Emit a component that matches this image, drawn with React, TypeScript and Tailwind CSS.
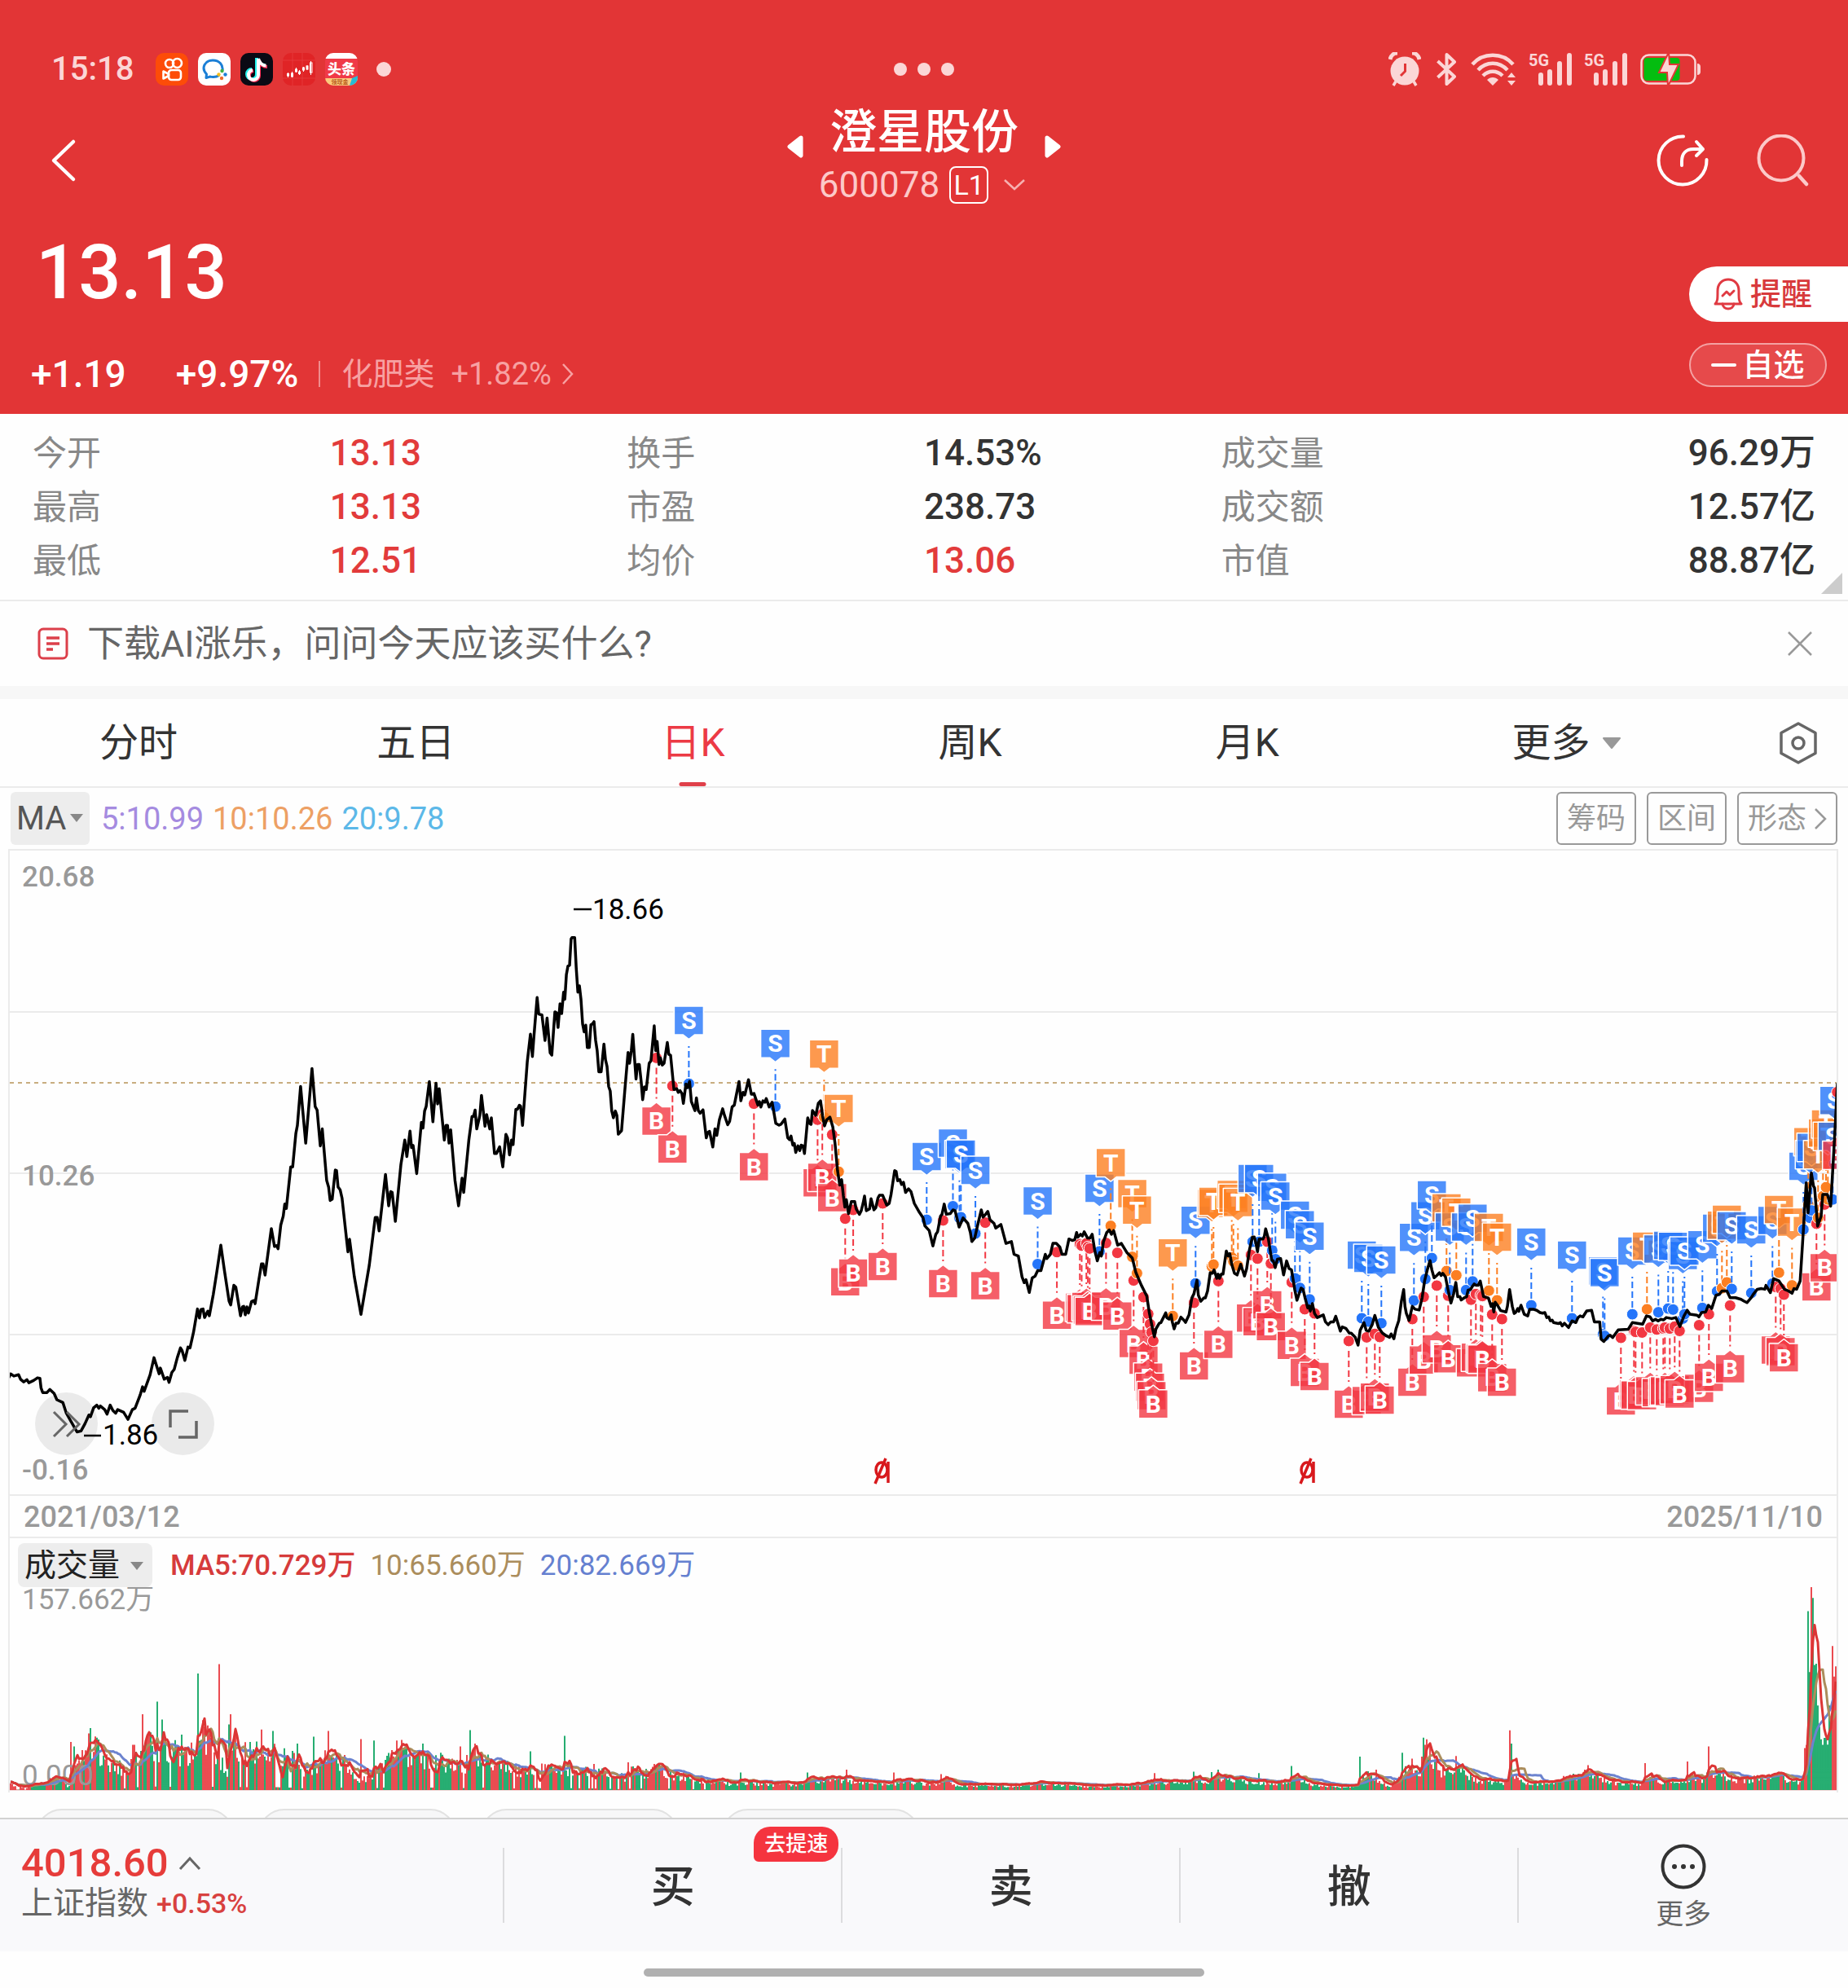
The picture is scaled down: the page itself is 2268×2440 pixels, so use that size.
import React from "react";

type Kind = "B" | "S" | "T";
type View = { x: number; y: number; sx: number; sy: number };

/* Each stretch of the chart data is stored on its own grid (origin + units per pixel). */
const V1: View = { x: 0, y: 1040, sx: 2.063, sy: 1.823 };
const V2: View = { x: 740, y: 1160, sx: 2.24, sy: 2.24 };
const V3: View = { x: 1400, y: 1300, sx: 3, sy: 2.9 };
const V4: View = { x: 1860, y: 1260, sx: 3, sy: 2.45 };

const priceParts: [View, string][] = [
  [V1, "22,1187 27,1178 35,1183 47,1180 52,1190 60,1196 68,1191 73,1198 85,1193 95,1187 101,1188 104,1210 108,1220 119,1220 126,1213 137,1222 144,1236 159,1242 168,1266 180,1285 195,1308 205,1306 215,1290 225,1270 229,1274 237,1254 245,1248 250,1255 254,1250 265,1258 271,1268 279,1248 286,1260 293,1266 298,1258 313,1264 324,1280 335,1258 342,1255 355,1225 361,1207 365,1217 380,1180 390,1142 403,1178 406,1165 416,1190 424,1186 428,1197 435,1175 441,1168 449,1142 457,1120 461,1126 468,1148 476,1118 481,1120 490,1085 500,1033 505,1053 509,1034 514,1033 518,1052 526,1038 530,1048 540,1000 549,950 559,890 568,945 580,1015 584,1024 592,980 597,984 609,1048 614,1028 617,1027 621,1046 625,1028 629,1042 637,1016 643,1014 646,1021 655,970 662,932 666,932 671,957 687,853 695,893 700,891 704,898 711,845 717,825 721,798 725,808 736,715 741,715 749,640 753,622 761,535 774,662 790,495 798,580 803,588 811,668 816,630 827,745 832,760 836,790 841,787 849,722 852,723 856,760 861,766 866,785 881,905 885,877 897,960 914,1045 935,935 950,828 955,828 960,858 976,732 984,802 989,770 993,772 1001,837 1015,710 1025,655 1030,692 1038,635 1042,672 1046,667 1055,730 1067,615 1071,628 1075,590 1079,580 1087,524 1096,614 1104,528 1108,574 1112,540 1125,655 1129,622 1133,622 1137,662 1141,632 1152,745 1161,802 1170,740 1174,772 1187,655 1195,602 1199,602 1203,588 1207,630 1215,600 1219,555 1228,624 1232,598 1240,630 1244,605 1252,685 1257,685 1265,670 1273,715 1281,642 1285,650 1290,688 1295,655 1299,665 1306,586 1310,586 1315,577 1318,579 1323,622 1335,480 1343,418 1348,468 1352,420 1360,336 1364,373 1372,375 1380,432 1385,382 1393,460 1397,465 1405,368 1409,370 1413,403 1418,350 1422,372 1427,324 1430,340 1434,285 1438,266 1442,264 1446,205 1448,202 1455,202 1459,270 1463,324 1467,310 1471,340 1475,395 1479,413 1483,398 1487,448 1492,448 1496,397 1500,395 1504,390 1508,432 1512,455 1516,502 1522,502 1529,440 1533,475 1537,490 1541,535 1545,545 1549,590 1553,605 1558,590 1562,600"],
  [V2, "42,520 51,510 60,400 69,295 73,325 78,290 82,245 91,368 95,328 100,328 105,375 109,425 114,390 119,397 127,325 132,318 141,222 145,290 149,265 154,328 158,310 163,330 168,325 177,268 181,300 186,303 195,397 203,395 207,405 212,400 217,408 221,435 228,382 232,392 238,375 243,430 253,455 257,420 262,455 267,462 275,453 284,530 288,515 293,512 302,555 308,505 313,523 320,480 329,450 334,468 343,494 348,485 355,445 361,440 374,375 379,428 385,405 390,412 400,370 408,410 415,408 426,440 430,430 434,445 440,428 445,432 449,422 457,445 465,432 475,490 484,495 490,492 500,478 508,530 513,535 517,525 522,550 526,545 530,570 536,552 541,565 545,550 550,552 554,573 563,475 568,490 572,493 576,455 585,468 592,435 598,428 604,470 609,497 615,480 624,473 632,500 638,545 645,620 651,660 656,645 661,690 665,720 669,700 675,738 683,705 692,705 696,725 705,740 710,730 715,710 719,690 724,730 733,725 737,697 745,728 750,722 756,695 760,688 769,688 774,700 780,715 787,710 792,685 802,620 806,622 810,648 816,645 821,658 826,652 832,680 840,670 847,678 856,710 870,735 880,750 885,772 897,785 907,827 915,795 920,788 928,745 932,740 938,712 944,740 955,738 962,728 968,730 979,775 985,762 990,750 1003,765 1010,790 1014,815 1022,805 1030,770 1040,728 1045,748 1052,740 1058,732 1064,755 1075,765 1080,778 1094,768 1108,820 1123,815 1130,850 1142,855 1152,912 1158,928 1163,920 1172,955 1180,915 1188,910 1195,895 1204,895 1212,865 1216,850 1220,862 1230,850 1237,820 1246,820 1256,830 1262,850 1272,850 1281,808 1290,812 1297,810 1302,790 1305,803 1313,795 1318,800 1323,788 1332,805 1339,805 1345,795 1352,840 1359,868 1366,845 1370,855 1376,815 1385,790 1392,783 1398,795 1404,785 1415,825 1425,820 1440,845 1455,860 1465,900 1480,935 1495,965 1502,1010 1510,1050"],
  [V3, "50,988 56,960 68,940 74,938 92,903 96,920 104,925 112,910 116,935 123,960 130,940 138,940 148,918 160,930 165,937 178,910 188,850 196,835 207,787 212,840 221,862 232,850 238,850 246,825 256,760 264,762 270,750 276,768 280,780 285,765 290,780 297,765 303,765 315,683 322,700 328,692 335,730 345,762 355,768 368,730 382,772 390,745 400,680 411,633 418,633 423,650 430,685 436,640 450,640 455,630 460,604 470,640 482,715 488,718 495,742 503,712 515,710 526,768 537,718 546,745 555,750 567,820 575,858 590,815 598,820 605,850 615,885 620,878 624,897 632,870 640,905 650,920 672,910 680,935 690,945 700,935 710,935 718,915 735,968 742,953 755,958 768,975 775,975 790,990 800,1018 808,965 822,938 830,965 840,968 852,945 862,912 875,955 890,975 905,985 916,990 922,978 932,995 940,960 950,930 960,860 968,820 973,880 978,905 988,930 1000,880 1010,890 1025,893 1036,850 1045,790 1055,750 1065,717 1072,750 1080,778 1090,770 1100,760 1106,770 1112,762 1122,775 1130,815 1142,868 1152,835 1160,795 1167,845 1175,845 1180,857 1190,850 1200,845 1205,822 1214,820 1220,810 1228,800 1235,805 1242,805 1250,790 1262,845 1280,850 1290,880 1295,870 1300,900 1305,865 1315,878 1325,895 1345,900 1350,880 1358,820 1368,880 1375,905"],
  [V4, "0,860 8,848 12,856 20,838 32,865 45,870 52,850 65,850 78,853 90,860 100,862 108,860 115,875 122,873 128,885 135,883 140,890 158,893 165,890 172,900 180,892 195,905 208,885 222,890 230,875 238,870 248,873 262,855 280,853 290,888 310,888 315,940 325,947 342,930 348,928 358,935 378,912 415,910 430,890 468,895 482,870 495,873 505,885 515,880 525,885 535,880 545,882 555,875 575,878 590,875 605,902 620,870 632,853 642,865 668,868 675,873 685,860 700,858 710,838 722,848 738,808 750,805 760,795 778,795 790,815 810,815 830,820 840,825 852,830 868,815 875,805 890,790 905,788 918,790 922,778 938,800 950,758 970,765 990,790 1005,795 1018,802 1025,788 1035,790 1048,765 1060,610 1070,470 1077,560 1089,440 1097,480 1101,485 1112,600 1125,570 1131,505 1148,505 1160,540 1170,400 1178,280 1185,170"],
];

const markParts: [View, string][] = [
  [V2, "B147,310 B191,387 S236,381 B415,436 S474,444 B590,480 B603,465 T608,473 B630,521 T648,623 B666,752 B688,728 B769,710 S890,755 B935,757 S962,718 S980,750 S984,748 S1024,793 B1051,763 S1195,877 B1248,844 B1311,822 B1316,826 B1329,820 B1333,830 B1338,834 S1365,842 B1383,819 T1396,772 B1414,846 T1455,857 B1459,922 T1468,902 B1486,968 B1499,1014 B1504,1042 B1508,1065 B1513,1088"],
  [V3, "T118,914 B196,867 S202,798 T262,738 T268,731 B286,790 T335,706 T341,720 T358,735 B406,697 S412,650 B430,710 S436,650 B466,650 B479,727 S484,681 S496,712 B556,794 S568,780 S586,814 B604,890 S622,855 B640,905 B766,1003 S814,922 B832,990 S838,934 B862,978 B880,989 S886,940 B1000,925 S1006,859 B1042,846 S1048,782 S1072,708 B1090,806 T1126,754 B1132,842 S1138,822 T1162,769 S1198,822 B1216,856 S1222,791 B1234,836 B1252,840 B1258,843 T1282,824 B1294,909 T1312,858 B1330,925 S1438,876"],
  [V4, "S208,877 S322,925 S328,930 B388,936 S430,865 B436,915 B442,918 B466,920 T484,850 B496,905 B520,911 S526,859 B544,908 B550,905 S562,848 B568,908 S580,851 B586,902 S616,878 S622,865 B676,898 B604,915 S688,846 B712,865 S742,796 T760,787 T778,769 B790,839 S796,789 S868,801 S946,773 B958,783 T970,740 B976,788 B988,806 T1018,778 S1060,610 T1078,536 S1084,575 S1090,553 B1108,593 T1114,575 T1132,510 B1138,535 T1143,483 T1150,520 S1168,520 S1174,412 B1184,197"],
];

const toPage = (v: View, x: number, y: number): [number, number] => [
  Math.round((v.x + x / v.sx) * 10) / 10,
  Math.round((v.y + y / v.sy) * 10) / 10,
];

const pricePoints = priceParts
  .flatMap(([v, s]) => s.split(" ").map((p) => {
    const [x, y] = p.split(",").map(Number);
    return toPage(v, x, y).join(",");
  }))
  .join(" ");

const marks = markParts.flatMap(([v, s]) =>
  s.split(" ").map((m) => {
    const [x, y] = m.slice(1).split(",").map(Number);
    const [px, py] = toPage(v, x, y);
    return { kind: m[0] as Kind, x: px, y: py };
  })
);

const tone: Record<Kind, string> = { B: "#f23742", S: "#2475fa", T: "#fc7f22" };

function Mark({ kind, x, y }: { kind: Kind; x: number; y: number }) {
  const c = tone[kind];
  const up = kind !== "B";
  const top = up ? y - 95 : y + 60;
  const shape = up
    ? `M${x - 18} ${top}h36v35h-11l-7 5.500l-7 -5.500h-11z`
    : `M${x - 18} ${top}h11l7 -5.500l7 5.500h11v35h-36z`;
  return (
    <g>
      <line x1={x} x2={x} y1={up ? y - 8 : y + 12} y2={up ? y - 46 : y + 50} stroke={c} strokeWidth="2" strokeDasharray="8 4" />
      <circle cx={x} cy={y} r="7" fill={c} stroke="#fff" strokeWidth="1" />
      <path d={shape} fill={c} fillOpacity="0.8" stroke="#fff" strokeWidth="1.500" strokeLinejoin="round" />
      <text x={x} y={top + 28} textAnchor="middle" fontSize="30" fontWeight="700" fill="#fff">{kind}</text>
    </g>
  );
}

/* Volume: level curve, single-day spikes, and three moving averages of the resulting bars. */
const volLevel = "15,24 40,10 70,20 85,40 105,35 118,10 125,80 140,110 158,160 172,120 190,90 218,60 232,120 250,150 275,150 300,130 330,140 345,180 360,150 366,80 370,120 385,60 398,180 410,120 440,130 470,120 500,100 525,60 545,110 590,100 608,30 630,50 645,100 690,115 740,100 790,90 810,110 840,85 890,60 910,85 950,60 970,80 1020,65 1060,40 1075,80 1100,60 1115,70 1160,45 1190,25 1220,32 1245,18 1270,28 1310,18 1360,20 1380,36 1440,36 1490,20 1510,15 1530,33 1588,20 1603,42 1618,15 1718,15 1768,22 1808,18 1848,10 1908,15 1968,28 2008,22 2033,42 2048,30 2068,42 2108,32 2168,22 2203,42 2218,22 2268,10 2308,15 2318,60 2333,42 2358,10 2388,72 2408,65 2423,140 2443,70 2468,60 2478,72 2498,40 2528,25 2558,25 2563,60 2580,30 2608,20 2648,35 2678,48 2703,58 2718,35 2758,20 2783,22 2798,52 2818,25 2858,30 2871,48 2888,30 2910,72 2928,50 2948,35 3008,45 3053,30 3060,70 3066,200 3071,560 3077,610 3081,450 3086,300 3092,190 3104,220 3108,280 3113,330 3118,340"
  .split(" ").map((p) => p.split(",").map(Number));

const volSpikes = "121,165,r 125,150,g 150,195,r 153,213,g 164,180,g 225,155,r 228,155,r 242,260,r 266,304,g 274,242,g 249,190,r 253,190,r 309,190,g 335,400,g 345,240,r 373,433,r 392,260,r 389,225,g 444,208,r 462,203,g 504,160,g 531,183,g 557,203,r 613,175,r 636,170,g 672,170,r 682,172,r 717,160,g 780,150,r 797,206,g 805,160,r 899,133,g 957,186,g 1067,95,r 1110,90,r 1256,60,g 1371,60,g 1437,70,r 1517,60,r 1598,55,r 1960,58,r 2025,63,g 2055,62,g 2066,70,g 2135,58,g 2191,83,g 2309,115,g 2334,70,r 2381,128,g 2397,108,r 2415,180,g 2419,155,r 2472,117,r 2563,205,r 2566,160,g 2688,70,r 2696,85,r 2792,92,r 2864,98,r 2900,150,r 3067,615,g 3074,698,r 3077,660,g 3109,495,r 3113,390,r 3116,425,r"
  .split(" ").map((p) => {
    const [x, h, c] = p.split(",");
    return { x: Number(x), h: Number(h), red: c === "r" };
  });

const FLOOR = 2197;

const volume = (() => {
  let seed = 7;
  const rand = () => {
    seed = (seed * 1103515245 + 12345) % 2147483648;
    return seed / 2147483648;
  };
  const n = 1121;
  const bars: { x: number; h: number; red: boolean }[] = [];
  let red = true;
  let k = 0;
  for (let i = 0; i < n; i++) {
    const x = 13 + i * 2;
    const u = x * 1.3827;
    while (k < volLevel.length - 2 && volLevel[k + 1][0] < u) k++;
    const [x0, h0] = volLevel[k];
    const [x1, h1] = volLevel[k + 1];
    const level = h0 + (h1 - h0) * Math.min(1, Math.max(0, (u - x0) / (x1 - x0)));
    if (rand() < 0.42) red = !red;
    if (u > 3078 && u < 3107) red = false;
    if (u >= 3107) red = true;
    const quiet = u < 1200 && rand() < 0.07;
    bars.push({ x, h: ((quiet ? 0.08 : 0.6 + 0.75 * rand()) * level) / 2.8, red });
  }
  for (const s of volSpikes) {
    const i = Math.min(n - 1, Math.round((s.x / 1.3827 - 13) / 2));
    bars[i] = { x: bars[i].x, h: s.h / 2.8, red: s.red };
  }
  const path = (r: boolean) =>
    bars.filter((b) => b.red === r).map((b) => `M${b.x} ${FLOOR}V${(FLOOR - b.h).toFixed(1)}`).join("");
  const mean = (w: number) =>
    bars.map((b, i) => {
      const part = bars.slice(Math.max(0, i - w + 1), i + 1);
      const m = part.reduce((a, c) => a + c.h, 0) / part.length;
      return `${b.x},${(FLOOR - m - 2).toFixed(1)}`;
    }).join(" ");
  return { up: path(true), down: path(false), ma5: mean(5), ma10: mean(10), ma20: mean(20) };
})();

function PriceChart() {
  return (
    <svg viewBox="12 1044 2242 844" className="block w-full" role="img" aria-label="日K">
      {[1242, 1440, 1638, 1835, 1887].map((y) => (
        <line key={y} x1="12" x2="2254" y1={y} y2={y} stroke="#ebebeb" strokeWidth="2" />
      ))}
      <line x1="12" x2="2254" y1="1329" y2="1329" stroke="#c8ad7f" strokeWidth="2" strokeDasharray="5 5" />
      <g fontSize="35" fill="#999" fontWeight="500">
        <text x="27" y="1088">20.68</text>
        <text x="27" y="1455">10.26</text>
        <text x="27" y="1816">-0.16</text>
        <text x="29" y="1874" fontSize="36">2021/03/12</text>
        <text x="2237" y="1874" fontSize="36" textAnchor="end">2025/11/10</text>
      </g>
      {marks.map((m, i) => <Mark key={i} {...m} />)}
      <polyline points={pricePoints} fill="none" stroke="#000" strokeWidth="3.500" strokeLinejoin="round" />
      <g stroke="#000" strokeWidth="2.500">
        <line x1="704" x2="726" y1="1116" y2="1116" />
        <line x1="103" x2="124" y1="1762" y2="1762" />
      </g>
      <g fontSize="35">
        <text x="727" y="1128">18.66</text>
        <text x="126" y="1773">1.86</text>
      </g>
      {[1083, 1605].map((x) => (
        <g key={x} fill="none" stroke="#d8181c" strokeWidth="3.500">
          <ellipse cx={x - 1} cy="1804" rx="7" ry="9" />
          <path d={`M${x + 7} 1794V1820M${x - 9} 1821L${x + 4} 1790`} />
        </g>
      ))}
    </svg>
  );
}

function VolumeChart() {
  return (
    <svg viewBox="12 1948 2242 252" className="block w-full" role="img" aria-label="成交量">
      <line x1="12" x2="2254" y1="2197" y2="2197" stroke="#f3d9d9" strokeWidth="2" />
      <path d={volume.up} stroke="#e8393f" strokeWidth="1.800" fill="none" />
      <path d={volume.down} stroke="#0fa562" strokeWidth="1.800" fill="none" />
      <text x="27" y="2191" fontSize="35" fill="#999">0.000</text>
      <g fill="none" strokeWidth="3" strokeLinejoin="round">
        <polyline points={volume.ma20} stroke="#6c83cf" />
        <polyline points={volume.ma10} stroke="#ab8d5c" />
        <polyline points={volume.ma5} stroke="#dc3535" />
      </g>
      <text x="27" y="1975" fontSize="35" fill="#999">157.662万</text>
    </svg>
  );
}

function Signal() {
  return (
    <div className="flex h-[42px] w-[51px] items-end">
      <span className="-mr-[13px] self-start text-[20px] font-bold leading-5 text-[#fbd6d6]">5G</span>
      <svg viewBox="0 0 42 42" className="h-[42px] w-[42px] shrink-0" aria-hidden="true">
        <path d="M3 28V38M14 24V38M26 14V38M38 4V38" stroke="#fbd6d6" strokeWidth="6" strokeLinecap="round" />
      </svg>
    </div>
  );
}

function StatusBar() {
  return (
    <div className="grid h-10 grid-cols-[1fr_auto_1fr] items-center">
      <div className="flex items-center pl-[63px]">
        <span className="w-[128px] text-[40px] font-medium leading-10 text-[#fbd6d6]">15:18</span>
        <div className="flex items-center gap-3">
          <svg viewBox="0 0 40 40" className="size-10">
            <rect width="40" height="40" rx="10" fill="#fd4c08" />
            <g fill="none" stroke="#fff" strokeWidth="2.600">
              <circle cx="17" cy="13" r="5" /><circle cx="26.500" cy="12.500" r="5.500" />
              <rect x="16" y="21" width="15" height="12" rx="3.500" /><path d="M16 26l-6.500 -3.500v9l6.500 -3.500z" strokeLinejoin="round" />
            </g>
          </svg>
          <svg viewBox="0 0 40 40" className="size-10">
            <rect width="40" height="40" rx="10" fill="#fff" />
            <path d="M26 27.500C21 30.500 16 29.500 15 29L10 30.500L10.500 26C3 18 9 9 18 9C26.500 9 31 15 30 21.500" fill="none" stroke="#1b7fd6" strokeWidth="3" strokeLinejoin="round" />
            <circle cx="29.500" cy="22" r="2.200" fill="#3fb344" /><circle cx="33.500" cy="26.500" r="2.200" fill="#1b7fd6" />
            <circle cx="29" cy="31" r="2.200" fill="#ee6b2b" /><circle cx="25.500" cy="26.500" r="2.200" fill="#f6be1a" />
          </svg>
          <svg viewBox="0 0 40 40" className="size-10">
            <rect width="40" height="40" rx="10" fill="#0a0a14" />
            <g fill="none" strokeWidth="4">
              <path d="M20 6V26A6 6 0 1 1 14 20M20 7C21 12 25 15 30 15" stroke="#25f4ee" />
              <path d="M23 9V28A6 6 0 1 1 16 22M23 9C24 14 28 17 33 17" stroke="#fe2c55" />
              <path d="M22 7V27A6 6 0 1 1 15 21M22 7C23 12 27 15.500 31.500 15.500" stroke="#fff" />
            </g>
          </svg>
          <svg viewBox="0 0 40 40" className="size-10">
            <rect width="40" height="40" rx="10" fill="#e02426" />
            <path d="M0 9H40M0 31H40M12 0V40M24 0V40" stroke="#ea4446" strokeWidth="0.600" />
            <g stroke="#fff" strokeWidth="1" fill="none">
              <path d="M6.500 24v6M11.500 23v7M16.500 18v6M20.500 21v6M25.500 17v6M30 15v6M34.500 10v17" />
              <rect x="5.500" y="25.500" width="2" height="2.500" fill="#fff" /><rect x="10.500" y="25" width="2" height="4" />
              <rect x="15.500" y="20" width="2" height="3" /><rect x="19.500" y="23" width="2" height="2.500" fill="#fff" />
              <rect x="24.500" y="18" width="2" height="3" /><rect x="29" y="16" width="2" height="4" fill="#fff" />
              <rect x="33.500" y="12" width="2.500" height="12" />
            </g>
          </svg>
          <svg viewBox="0 0 40 40" className="size-10">
            <clipPath id="news-tile"><rect width="40" height="40" rx="10" /></clipPath>
            <g clipPath="url(#news-tile)">
              <rect width="40" height="40" fill="#f03a48" />
              <rect width="40" height="7" fill="#fff" />
              <path d="M0 31H40V40H0z" fill="#fbcb7d" />
              <path d="M33 31L40 28V40H30z" fill="#25bcd6" />
              <text x="20" y="26" fontSize="17" fontWeight="900" fill="#fff" textAnchor="middle">头条</text>
              <text x="18" y="38" fontSize="7" fontWeight="700" fill="#b85a18" textAnchor="middle">领现金</text>
            </g>
          </svg>
        </div>
        <span className="ml-[23px] size-[18px] rounded-full bg-[#fbd6d6]" />
      </div>
      <div className="flex gap-[13px]">
        <span className="size-4 rounded-full bg-[#fbd6d6]" />
        <span className="size-4 rounded-full bg-[#fbd6d6]" />
        <span className="size-4 rounded-full bg-[#fbd6d6]" />
      </div>
      <div className="flex items-center justify-end pr-[181px]">
        <svg viewBox="0 0 40 42" className="mr-[19px] h-[42px] w-10">
          <circle cx="20" cy="23" r="17.500" fill="#fbd6d6" />
          <path d="M2 9C3 4 7 1 11 1M38 9C37 4 33 1 29 1" stroke="#fbd6d6" strokeWidth="5" fill="none" />
          <path d="M9 36L6 41M31 36L34 41" stroke="#fbd6d6" strokeWidth="3.500" />
          <path d="M20.500 14V23.500L15 29" stroke="#e23536" strokeWidth="3" fill="none" />
        </svg>
        <svg viewBox="0 0 24 40" className="mr-[18px] h-10 w-6">
          <path d="M1.500 10L22 29L12.500 38V2L22 11L1.500 30" fill="none" stroke="#fbd6d6" strokeWidth="4" strokeLinejoin="round" />
        </svg>
        <svg viewBox="0 0 55 42" className="mr-4 h-[42px] w-[55px]">
          <g fill="none" stroke="#fbd6d6" strokeWidth="4.500">
            <path d="M2 15C15 0 39 0 52 15" /><path d="M9 22C19 11 35 11 45 22" /><path d="M15 29C22 22 32 22 39 29" />
          </g>
          <path d="M20 34C24 30 30 30 34 34L27 41z" fill="#fbd6d6" />
          <path d="M50 25l5 6h-10zM50 41l-5 -6h10z" fill="#fbd6d6" />
        </svg>
        <div className="flex gap-[17px]"><Signal /><Signal /></div>
        <svg viewBox="0 0 74 42" className="ml-[18px] h-[42px] w-[74px]">
          <rect x="1.500" y="3.500" width="66" height="35" rx="9" fill="none" stroke="#fbd6d6" strokeWidth="2.500" />
          <rect x="4.500" y="7" width="44" height="28" rx="4" fill="#04bd10" />
          <path d="M70 14c3 0 4 2 4 4v6c0 2 -1 4 -4 4z" fill="#fbd6d6" />
          <path d="M35 0L23 25H33L34 42L47 15H36z" fill="#fbd6d6" stroke="#e23536" strokeWidth="2" />
        </svg>
      </div>
    </div>
  );
}

const stats: [string, string, boolean][] = [
  ["今开", "13.13", true], ["换手", "14.53%", false], ["成交量", "96.29万", false],
  ["最高", "13.13", true], ["市盈", "238.73", false], ["成交额", "12.57亿", false],
  ["最低", "12.51", true], ["均价", "13.06", true], ["市值", "88.87亿", false],
];

const outline = "flex h-[65px] items-center rounded-md border-2 border-[#999] px-[11px] text-[36px] text-[#999]";

export default function App() {
  return (
    <div className="w-full bg-[#fefefe] text-[#333]" style={{ fontFamily: 'Roboto, "Noto Sans CJK SC", sans-serif' }}>
      <header className="bg-[#e23536] pt-16 pb-[26px] text-white">
        <StatusBar />
        <div className="mt-6 grid h-[138px] grid-cols-[1fr_auto_1fr] items-center">
          <button className="ml-[60px] w-9" aria-label="返回">
            <svg viewBox="0 0 36 54" className="h-[54px] w-9"><path d="M30 4L6 27L30 50" fill="none" stroke="#fff" strokeWidth="4.500" strokeLinecap="round" strokeLinejoin="round" /></svg>
          </button>
          <div className="flex h-full flex-col items-center">
            <div className="flex h-[68px] items-end">
              <button className="mb-[2px] mr-8" aria-label="上一个">
                <svg viewBox="0 0 20 28" className="block h-7 w-5"><path d="M17 3L3 14L17 25z" fill="#fff" stroke="#fff" strokeWidth="5" strokeLinejoin="round" /></svg>
              </button>
              <h1 className="text-[58px] font-medium leading-[68px]">澄星股份</h1>
              <button className="mb-[2px] ml-8" aria-label="下一个">
                <svg viewBox="0 0 20 28" className="block h-7 w-5"><path d="M3 3L17 14L3 25z" fill="#fff" stroke="#fff" strokeWidth="5" strokeLinejoin="round" /></svg>
              </button>
            </div>
            <button className="flex h-[62px] items-center pr-1">
              <span className="text-[44px] text-[#fcc9c9]">600078</span>
              <span className="ml-3 flex h-[46px] w-12 items-center justify-center rounded-lg border-2 border-white text-[34px] leading-none">L1</span>
              <svg viewBox="0 0 28 16" className="ml-[18px] h-4 w-7"><path d="M2 2L14 13L26 2" fill="none" stroke="#f7b0b0" strokeWidth="2.500" /></svg>
            </button>
          </div>
          <div className="flex items-center justify-end gap-[59px] pr-12">
            <button aria-label="分享">
              <svg viewBox="0 0 64 64" className="block size-16">
                <g fill="none" stroke="#fff" strokeWidth="4" strokeLinecap="round" strokeLinejoin="round">
                  <path d="M33 2.500A29.500 29.500 0 1 0 61.500 31" />
                  <path d="M31 38V33C31 23 37 18 45 18H57M49 9L57 18L49 26" />
                </g>
              </svg>
            </button>
            <button aria-label="搜索">
              <svg viewBox="0 0 64 64" className="block size-16">
                <circle cx="30" cy="29" r="27.500" fill="none" stroke="#fcc9c9" strokeWidth="4" />
                <path d="M52 51L61 61" stroke="#fcc9c9" strokeWidth="4.500" strokeLinecap="round" />
              </svg>
            </button>
          </div>
        </div>
        <div className="flex justify-between">
          <div className="pt-[21px]">
            <div className="flex h-24 items-center pl-11 text-[92px] font-medium leading-none">13.13</div>
            <div className="mt-[53px] flex h-[46px] items-center pl-[38px] text-[46px] font-medium leading-none">
              <span>+1.19</span>
              <span className="ml-[61px]">+9.97%</span>
              <span className="ml-[25px] h-8 w-[2px] bg-[#f08c8d]" />
              <a href="#sector" className="ml-[26px] flex items-center text-[38px] font-normal text-[#f7a1a2]">
                <span>化肥类</span>
                <span className="ml-5">+1.82%</span>
                <svg viewBox="0 0 16 28" className="ml-3 h-7 w-4"><path d="M2 2L13 14L2 26" fill="none" stroke="#f7a1a2" strokeWidth="2.500" /></svg>
              </a>
            </div>
          </div>
          <div className="flex w-[195px] flex-col gap-[26px] pt-[61px]">
            <button className="flex h-[68px] items-center rounded-l-full bg-white pl-[30px] text-[38px] font-medium text-[#d83a3c]">
              <svg viewBox="0 0 36 40" className="mr-[9px] h-10 w-9">
                <g fill="none" stroke="#e03a42" strokeWidth="3" strokeLinejoin="round" strokeLinecap="round">
                  <path d="M2 32C5 29 5 26 5 16C5 7 11 2 18 2C25 2 31 7 31 16C31 26 31 29 34 32z" />
                  <path d="M11 32C12 40 24 40 25 32" /><path d="M11 22L16 17L20 21L25 16" />
                </g>
              </svg>
              提醒
            </button>
            <button className="mr-[26px] flex h-[54px] items-center justify-center gap-[7px] rounded-full border-2 border-[#f4a2a3] bg-[#e64a4b] text-[38px] font-medium leading-none">
              <span className="h-1 w-[31px] rounded-full bg-white" />
              自选
            </button>
          </div>
        </div>
      </header>

      <section className="relative border-b-2 border-[#ebebeb] px-10 py-[15px]">
        <dl className="grid grid-cols-3">
          {stats.map(([label, value, red], i) => (
            <div key={label} className="grid h-[66px] grid-cols-2 items-center">
              <dt className="text-[42px] text-[#888]">{label}</dt>
              <dd className={`text-[44px] font-medium ${red ? "text-[#e23b3b]" : "text-[#333]"} ${i % 3 === 2 ? "text-right" : ""}`}>{value}</dd>
            </div>
          ))}
        </dl>
        <svg viewBox="0 0 26 26" className="absolute right-[7px] bottom-[7px] size-[26px]"><path d="M26 0V26H0z" fill="#ccc" /></svg>
      </section>

      <section className="flex h-[104px] items-center pr-[43px] pl-[46px]">
        <svg viewBox="0 0 38 40" className="h-10 w-[38px]">
          <rect x="2" y="2" width="34" height="36" rx="5" fill="none" stroke="#dc3f4a" strokeWidth="3" />
          <path d="M11 13H27M11 20H27M11 27H19" stroke="#dc3f4a" strokeWidth="3.500" />
        </svg>
        <a href="#ai" className="ml-[23px] pt-[2px] text-[45px] text-[#666]">下载AI涨乐，问问今天应该买什么?</a>
        <button className="ml-auto" aria-label="关闭">
          <svg viewBox="0 0 32 32" className="block size-8"><path d="M2 2L30 30M30 2L2 30" stroke="#999" strokeWidth="2.500" /></svg>
        </button>
      </section>
      <div className="h-4 bg-[#f7f7f7]" />

      <nav className="flex h-[109px] items-stretch border-b-2 border-[#ebebeb] text-[48px] text-[#333]">
        <button className="w-[15%]">分时</button>
        <button className="w-[15%]">五日</button>
        <button className="relative w-[15%] text-[#ec3a45]">
          日K
          <span className="absolute bottom-0 left-1/2 h-[5px] w-[33px] -translate-x-1/2 rounded-full bg-[#e0404a]" />
        </button>
        <button className="w-[15%]">周K</button>
        <button className="w-[15%]">月K</button>
        <button className="flex flex-1 items-center justify-center gap-[15px]">
          更多
          <svg viewBox="0 0 24 16" className="h-4 w-6"><path d="M2 2H22L12 14z" fill="#999" stroke="#999" strokeWidth="2" strokeLinejoin="round" /></svg>
        </button>
        <button className="flex w-[123px] items-center justify-center" aria-label="设置">
          <svg viewBox="0 0 48 52" className="h-[52px] w-12">
            <path d="M24 2L45 13.500V38.500L24 50L3 38.500V13.500z" fill="none" stroke="#666" strokeWidth="3.500" strokeLinejoin="round" />
            <circle cx="24" cy="26" r="7" fill="none" stroke="#666" strokeWidth="3.500" />
          </svg>
        </button>
      </nav>

      <section className="flex h-[75px] items-center pr-[13px] pl-[13px]">
        <label className="relative block">
          <select aria-label="均线" className="block h-[65px] w-[97px] appearance-none rounded-md bg-[#ededed] pl-[7px] text-[40px] text-[#555]">
            <option>MA</option>
          </select>
          <svg viewBox="0 0 16 10" className="pointer-events-none absolute top-[27px] right-2 h-[10px] w-4"><path d="M0 0H16L8 10z" fill="#888" /></svg>
        </label>
        <div className="ml-[14px] flex gap-[11px] pt-[2px] text-[38px]">
          <span className="text-[#a58be0]">5:10.99</span>
          <span className="text-[#eda064]">10:10.26</span>
          <span className="text-[#5cb8e8]">20:9.78</span>
        </div>
        <div className="ml-auto flex gap-[13px]">
          <button className={outline}>筹码</button>
          <button className={outline}>区间</button>
          <button className={outline}>
            形态
            <svg viewBox="0 0 16 28" className="ml-[9px] h-7 w-4"><path d="M2 2L14 14L2 26" fill="none" stroke="#999" strokeWidth="2.500" /></svg>
          </button>
        </div>
      </section>

      <main className="relative mr-3 ml-[10px] border-x-2 border-t-2 border-[#ebebeb]">
        <div className="relative">
          <PriceChart />
          <button className="absolute bottom-[102px] left-[31px] flex size-[77px] items-center justify-center rounded-full bg-black/8" aria-label="展开">
            <svg viewBox="0 0 36 34" className="h-[34px] w-9"><path d="M2 2L17 17L2 32M18 2L33 17L18 32" fill="none" stroke="#666" strokeWidth="3" /></svg>
          </button>
          <button className="absolute bottom-[102px] left-[174px] flex size-[77px] items-center justify-center rounded-full bg-black/8" aria-label="全屏">
            <svg viewBox="0 0 36 36" className="size-9"><path d="M2 22V2H24M34 14V34H12" fill="none" stroke="#666" strokeWidth="3.500" /></svg>
          </button>
        </div>
        <div className="flex h-[60px] items-end pl-[10px]">
          <label className="relative block">
            <select aria-label="指标" className="block h-[54px] w-[165px] appearance-none rounded-lg bg-[#ededed] pl-[8px] text-[39px] leading-none text-[#222]">
              <option>成交量</option>
            </select>
            <svg viewBox="0 0 16 10" className="pointer-events-none absolute top-[23px] right-[11px] h-[10px] w-4"><path d="M0 0H16L8 10z" fill="#888" /></svg>
          </label>
          <div className="ml-[22px] flex gap-[18px] text-[35px] leading-[52px]">
            <span className="font-medium text-[#d63b3b]">MA5:70.729万</span>
            <span className="text-[#ab8d5c]">10:65.660万</span>
            <span className="text-[#6580d0]">20:82.669万</span>
          </div>
        </div>
        <VolumeChart />
      </main>

      <div className="flex h-[31px] gap-[30px] overflow-hidden pt-5 pl-11">
        <span className="h-16 w-[243px] rounded-full border-2 border-[#e2e2e2] bg-[#f7f7f8]" />
        <span className="h-16 w-[243px] rounded-full border-2 border-[#e2e2e2] bg-[#f7f7f8]" />
        <span className="h-16 w-[243px] rounded-full border-2 border-[#e2e2e2] bg-[#f7f7f8]" />
        <span className="ml-[23px] h-16 w-[243px] rounded-full border-2 border-[#e2e2e2] bg-[#f7f7f8]" />
      </div>

      <footer>
        <div className="flex h-[164px] items-center border-t-2 border-[#d2d2d2] bg-[#f9f9fb]">
          <button className="flex h-[92px] w-[27.3%] flex-col justify-center border-r-2 border-[#dcdcde] pb-[6px] pl-[26px] text-left">
            <span className="flex items-center text-[49px] font-medium leading-[50px] text-[#e63c3a]">
              4018.60
              <svg viewBox="0 0 28 18" className="ml-3 h-[18px] w-7"><path d="M2 16L14 3L26 16" fill="none" stroke="#666" strokeWidth="3" /></svg>
            </span>
            <span className="flex items-center gap-[10px] text-[39px] leading-[48px] text-[#666]">
              上证指数
              <span className="text-[34px] font-medium text-[#d8413f]">+0.53%</span>
            </span>
          </button>
          <button className="relative h-[92px] w-[18.3%] border-r-2 border-[#dcdcde] pt-1 text-[54px] font-medium">
            买
            <span className="absolute -top-[26px] right-[3px] rounded-[20px] rounded-bl-[6px] bg-[#f5343f] px-[13px] text-[26px] leading-[43px] text-white">去提速</span>
          </button>
          <button className="h-[92px] w-[18.3%] border-r-2 border-[#dcdcde] pt-1 text-[54px] font-medium">卖</button>
          <button className="h-[92px] w-[18.3%] border-r-2 border-[#dcdcde] pt-1 text-[54px] font-medium">撤</button>
          <button className="flex flex-1 flex-col items-center gap-2 pt-[6px] text-[34px] leading-[44px] text-[#666]">
            <svg viewBox="0 0 56 56" className="size-14">
              <circle cx="28" cy="28" r="25.500" fill="none" stroke="#333" strokeWidth="4" />
              <g fill="#333"><circle cx="17" cy="28" r="3" /><circle cx="28" cy="28" r="3" /><circle cx="39" cy="28" r="3" /></g>
            </svg>
            更多
          </button>
        </div>
        <div className="flex justify-center pt-[21px] pb-[14px]">
          <span className="h-[10px] w-[688px] rounded-full bg-[#b0b0b0]" />
        </div>
      </footer>
    </div>
  );
}
